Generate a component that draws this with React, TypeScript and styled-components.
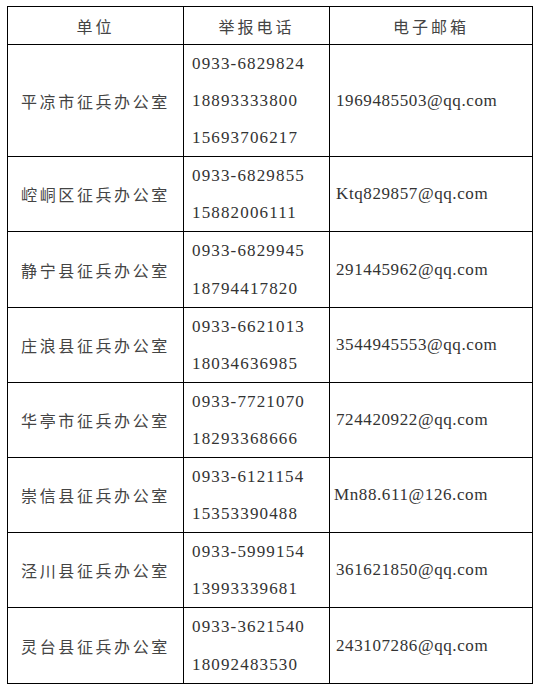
import React from "react";
import styled, { createGlobalStyle } from "styled-components";

const Global = createGlobalStyle`
  html, body { margin: 0; padding: 0; background: #fff; }
`;

const Page = styled.div`
  padding: 6px 8px 0 7px;
`;

const Table = styled.table`
  border-collapse: collapse;
  width: 525px;
  table-layout: fixed;
  color: #333;
`;

const HeadCell = styled.th`
  border: 1px solid #000;
  height: 37px;
  padding: 0;
  font-family: "Noto Sans CJK SC", sans-serif;
  font-weight: normal;
  font-size: 16px;
  letter-spacing: 3px;
  color: #444;
  text-align: center;
  vertical-align: middle;
`;

const UnitCell = styled.td`
  border: 1px solid #000;
  padding: 0;
  font-family: "Noto Sans CJK SC", sans-serif;
  font-size: 16px;
  letter-spacing: 2.6px;
  color: #444;
  text-align: center;
  vertical-align: middle;
`;

const PhoneCell = styled.td`
  border: 1px solid #000;
  padding: 0 0 0 8px;
  vertical-align: middle;
`;

const PhoneLine = styled.div`
  font-family: "Liberation Serif", serif;
  font-size: 17px;
  letter-spacing: 1.15px;
  line-height: 37.1px;
  white-space: nowrap;
`;

const MailCell = styled.td<{ $tight?: boolean }>`
  border: 1px solid #000;
  padding: 0 0 0 ${(p) => (p.$tight ? 4 : 6)}px;
  font-family: "Liberation Serif", serif;
  font-size: 17px;
  letter-spacing: 0.6px;
  vertical-align: middle;
  white-space: nowrap;
`;

const rows = [
  { unit: "平凉市征兵办公室", phones: ["0933-6829824", "18893333800", "15693706217"], mail: "1969485503@qq.com" },
  { unit: "崆峒区征兵办公室", phones: ["0933-6829855", "15882006111"], mail: "Ktq829857@qq.com" },
  { unit: "静宁县征兵办公室", phones: ["0933-6829945", "18794417820"], mail: "291445962@qq.com" },
  { unit: "庄浪县征兵办公室", phones: ["0933-6621013", "18034636985"], mail: "3544945553@qq.com" },
  { unit: "华亭市征兵办公室", phones: ["0933-7721070", "18293368666"], mail: "724420922@qq.com" },
  { unit: "崇信县征兵办公室", phones: ["0933-6121154", "15353390488"], mail: "Mn88.611@126.com", tight: true },
  { unit: "泾川县征兵办公室", phones: ["0933-5999154", "13993339681"], mail: "361621850@qq.com" },
  { unit: "灵台县征兵办公室", phones: ["0933-3621540", "18092483530"], mail: "243107286@qq.com" },
];

export default function App() {
  return (
    <Page>
      <Global />
      <Table>
        <colgroup>
          <col style={{ width: 176 }} />
          <col style={{ width: 146 }} />
          <col style={{ width: 203 }} />
        </colgroup>
        <thead>
          <tr>
            <HeadCell>单位</HeadCell>
            <HeadCell>举报电话</HeadCell>
            <HeadCell>电子邮箱</HeadCell>
          </tr>
        </thead>
        <tbody>
          {rows.map((r) => (
            <tr key={r.unit}>
              <UnitCell>{r.unit}</UnitCell>
              <PhoneCell>
                {r.phones.map((p) => (
                  <PhoneLine key={p}>{p}</PhoneLine>
                ))}
              </PhoneCell>
              <MailCell $tight={r.tight}>{r.mail}</MailCell>
            </tr>
          ))}
        </tbody>
      </Table>
    </Page>
  );
}
